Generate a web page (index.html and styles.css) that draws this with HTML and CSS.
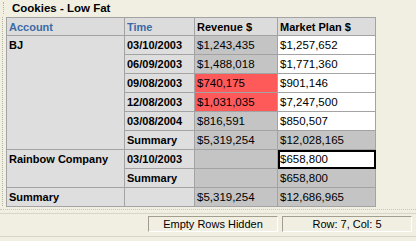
FILE: index.html
```html
<!DOCTYPE html>
<html>
<head>
<meta charset="utf-8">
<link rel="stylesheet" href="styles.css">
</head>
<body>
<div class="window">
  <div class="title-row">
    <div class="grip-top"></div>
    <div class="title">Cookies - Low Fat</div>
  </div>
  <div class="grid-area">
    <div class="grip-left"></div>
    <table class="grid">
      <colgroup>
        <col class="c-acc"><col class="c-time"><col class="c-rev"><col class="c-plan">
      </colgroup>
      <tr class="head">
        <th class="dim">Account</th>
        <th class="dim">Time</th>
        <th>Revenue $</th>
        <th>Market Plan $</th>
      </tr>
      <tr>
        <td class="rh" rowspan="6">BJ</td>
        <td class="rh">03/10/2003</td>
        <td class="rev">$1,243,435</td>
        <td class="plan">$1,257,652</td>
      </tr>
      <tr>
        <td class="rh">06/09/2003</td>
        <td class="rev">$1,488,018</td>
        <td class="plan">$1,771,360</td>
      </tr>
      <tr>
        <td class="rh">09/08/2003</td>
        <td class="rev alert">$740,175</td>
        <td class="plan">$901,146</td>
      </tr>
      <tr>
        <td class="rh">12/08/2003</td>
        <td class="rev alert">$1,031,035</td>
        <td class="plan">$7,247,500</td>
      </tr>
      <tr>
        <td class="rh">03/08/2004</td>
        <td class="rev">$816,591</td>
        <td class="plan">$850,507</td>
      </tr>
      <tr>
        <td class="rh">Summary</td>
        <td class="rev">$5,319,254</td>
        <td class="sum">$12,028,165</td>
      </tr>
      <tr>
        <td class="rh" rowspan="2">Rainbow Company</td>
        <td class="rh">03/10/2003</td>
        <td class="rev"></td>
        <td class="plan sel">$658,800</td>
      </tr>
      <tr>
        <td class="rh">Summary</td>
        <td class="rev"></td>
        <td class="sum">$658,800</td>
      </tr>
      <tr>
        <td class="rh">Summary</td>
        <td class="rh"></td>
        <td class="rev">$5,319,254</td>
        <td class="sum">$12,686,965</td>
      </tr>
    </table>
  </div>
  <div class="hgrip"></div>
  <div class="statusbar">
    <div class="panel p1">Empty Rows Hidden</div>
    <div class="panel p2">Row: 7, Col: 5</div>
  </div>
</div>
</body>
</html>
```

FILE: styles.css
```css
html, body {
  margin: 0;
  padding: 0;
  background: #f1efe2;
}
.window {
  width: 416px;
  height: 241px;
  display: flex;
  flex-direction: column;
  font-family: "Liberation Sans", Arial, sans-serif;
  font-size: 11px;
  color: #000;
  overflow: hidden;
}
.title-row {
  height: 17px;
  display: flex;
  align-items: flex-start;
}
.grip-top {
  width: 3px;
  height: 12px;
  margin: 2px 0 0 0;
  border-right: 1px dotted #b8b5a6;
}
.title {
  margin-left: 8px;
  font-weight: bold;
  font-size: 11.5px;
  line-height: 17px;
}
.grid-area {
  display: flex;
  align-items: flex-start;
}
.grip-left {
  width: 2px;
  height: 189px;
  margin-right: 3px;
  border-right: 1px dotted #b4b1a1;
}
.grid {
  border-collapse: collapse;
  table-layout: fixed;
  width: 370px;
}
.c-acc { width: 118px; }
.c-time { width: 70px; }
.c-rev { width: 83px; }
.c-plan { width: 98px; }
.grid th, .grid td {
  border: 1px solid #a3a3a3;
  padding: 0 0 0 2px;
  height: 18px;
  text-align: left;
  white-space: nowrap;
  overflow: hidden;
  vertical-align: middle;
}
.grid td {
  font-size: 11.5px;
}
.grid th {
  background: #dcdcdc;
  font-weight: bold;
}
.grid th.dim {
  color: #3d6aa5;
}
.head th { height: 17px; }
.grid td.rh {
  background: #dedede;
  font-weight: bold;
  font-size: 11px;
  vertical-align: top;
  padding-top: 3px;
  height: 15px;
}
.grid td.rev {
  background: #c4c4c4;
}
.grid td.plan {
  background: #ffffff;
}
.grid td.sum {
  background: #c4c4c4;
}
.grid td.alert {
  background: #ff5a5a;
}
.grid td.sel {
  outline: 2px solid #000;
  outline-offset: -2px;
}
.hgrip {
  height: 0;
  margin: 2px 0 0 0;
  border-top: 1px dotted #c9c6b6;
}
.statusbar {
  margin-top: 3px;
  border-top: 1px solid #d8d5c5;
  padding-top: 2px;
  display: flex;
  gap: 4px;
  padding-left: 148px;
  height: 20px;
  border-bottom: 1px solid #d8d5c5;
}
.panel {
  height: 14px;
  border-top: 1px solid #a19e8f;
  border-left: 1px solid #a19e8f;
  border-right: 1px solid #ffffff;
  border-bottom: 1px solid #ffffff;
  text-align: center;
  line-height: 14px;
  font-size: 11px;
}
.p1 { width: 128px; }
.p2 { width: 128px; }
```
